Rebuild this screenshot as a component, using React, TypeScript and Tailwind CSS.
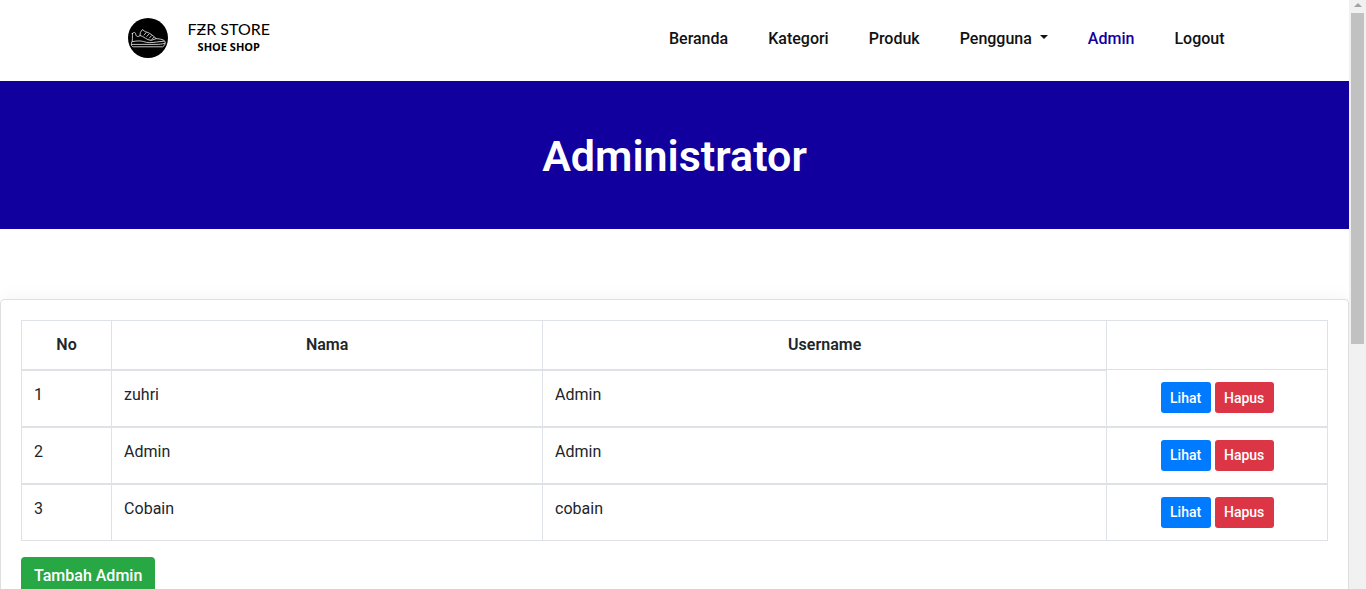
const navLinks = ["Beranda", "Kategori", "Produk"];

const admins = [
  { no: 1, nama: "zuhri", username: "Admin" },
  { no: 2, nama: "Admin", username: "Admin" },
  { no: 3, nama: "Cobain", username: "cobain" },
];

function ShoeMark() {
  return (
    <svg viewBox="0 0 40 40" className="size-10 shrink-0" aria-hidden="true">
      <circle cx="20" cy="20" r="20" fill="#000" />
      <g fill="none" stroke="#fff" strokeOpacity="0.85" strokeWidth="0.9" strokeLinejoin="round" strokeLinecap="round">
        <path d="M4.4 15.4C6.6 13.6 7.6 14.6 7.8 16.6C8.4 19 10.6 19 12 17.4L12.4 14.4L14.4 11.6L17.2 13.6C21.6 14.6 24.8 17.4 28.2 20.6C32.4 21 36.4 21.6 37.2 24C37.4 25.6 36.6 27.8 34.6 28.8H5.4C3.8 28.8 3.2 27.2 3.4 25.2C5 22.6 4.2 18.6 4.4 15.4Z" />
        <path d="M3.6 26.4H28C31 26.4 33.6 26.2 36.6 25.4" />
        <path d="M4.4 23.6C9.6 22.6 13 22.8 15.6 23.6C19.6 25 23.6 24.8 28.6 24L36 23.2" />
        <path d="M12 17.4C16 18.2 18.4 22.2 23.2 22.4L28.2 20.6M16.2 17L18 14.8M18.8 18.4L20.8 16.2M21.4 20L23.4 17.8M23.8 21.4L26 19.2" />
      </g>
    </svg>
  );
}

export default function App() {
  return (
    <div className="flex h-screen overflow-hidden bg-white font-['Roboto',sans-serif] text-base text-[#212529]">
      <div className="min-w-0 flex-1 overflow-hidden">
        <header className="mx-auto flex h-[81px] max-w-[1140px] items-center justify-between pb-1 pl-[23px]">
          <a href="#beranda" className="flex items-center gap-5 pb-0.5 text-black">
            <ShoeMark />
            <span className="flex flex-col items-center pb-0.5">
              <span className="font-['Lato',sans-serif] text-base leading-5">FƵR STORE</span>
              <span className="font-['Open_Sans',sans-serif] text-[11px] leading-4 font-bold">SHOE SHOP</span>
            </span>
          </a>
          <nav className="flex items-center text-base font-medium text-[#111]">
            {navLinks.map((label) => (
              <a key={label} href={`#${label.toLowerCase()}`} className="px-5">
                {label}
              </a>
            ))}
            <button type="button" className="flex items-center gap-2 px-5">
              Pengguna
              <svg viewBox="0 0 8 4" className="mb-1 h-1 w-2" aria-hidden="true">
                <path d="M0 0H8L4 4Z" fill="currentColor" />
              </svg>
            </button>
            <a href="#admin" className="px-5 text-[#11009e]">
              Admin
            </a>
            <a href="#logout" className="px-5">
              Logout
            </a>
          </nav>
        </header>

        <section className="flex h-[148px] items-center justify-center bg-[#11009e] pt-0.5">
          <h1 className="text-[43px] font-semibold text-white">Administrator</h1>
        </section>

        <main className="mt-[70px] rounded border border-[#dfdfdf] p-5 shadow-[0_0_20px_rgba(0,0,0,0.05)]">
          <table className="w-full table-fixed border-collapse border border-[#dee2e6]">
            <colgroup>
              <col className="w-[6.9%]" />
              <col className="w-[33%]" />
              <col className="w-[43.2%]" />
              <col className="w-[16.9%]" />
            </colgroup>
            <thead>
              <tr className="h-[49px]">
                <th scope="col" className="border border-b-2 border-[#dee2e6] px-3 font-semibold">No</th>
                <th scope="col" className="border border-b-2 border-[#dee2e6] px-3 font-semibold">Nama</th>
                <th scope="col" className="border border-b-2 border-[#dee2e6] px-3 font-semibold">Username</th>
                <td className="border border-[#dee2e6] px-3" />
              </tr>
            </thead>
            <tbody>
              {admins.map((a) => (
                <tr
                  key={a.no}
                  className="h-[57px] border-b-2 border-[#dee2e6] align-top leading-6 last:border-b"
                >
                  <td className="border-x border-[#dee2e6] px-3 pt-3">{a.no}</td>
                  <td className="border-x border-[#dee2e6] px-3 pt-3">{a.nama}</td>
                  <td className="border-x border-[#dee2e6] px-3 pt-3">{a.username}</td>
                  <td className="border-x border-[#dee2e6] px-3 pt-3">
                    <div className="flex justify-center gap-1 text-sm font-medium text-white">
                      <button type="button" className="h-[31px] w-[50px] rounded-[3px] bg-[#007bff]">Lihat</button>
                      <button type="button" className="h-[31px] w-[59px] rounded-[3px] bg-[#dc3545]">Hapus</button>
                    </div>
                  </td>
                </tr>
              ))}
            </tbody>
          </table>
          <button type="button" className="mt-4 h-[38px] rounded bg-[#28a745] px-[13px] font-medium text-white">
            Tambah Admin
          </button>
        </main>
      </div>

      <div className="flex w-[17px] shrink-0 flex-col items-center bg-[#f1f1f1]" aria-hidden="true">
        <svg viewBox="0 0 8 4" className="mt-[3px] mb-1.5 h-1 w-2">
          <path d="M0 4L4 0L8 4Z" fill="#a3a3a3" />
        </svg>
        <div className="h-[331px] w-[13px] bg-[#c1c1c1]" />
      </div>
    </div>
  );
}
